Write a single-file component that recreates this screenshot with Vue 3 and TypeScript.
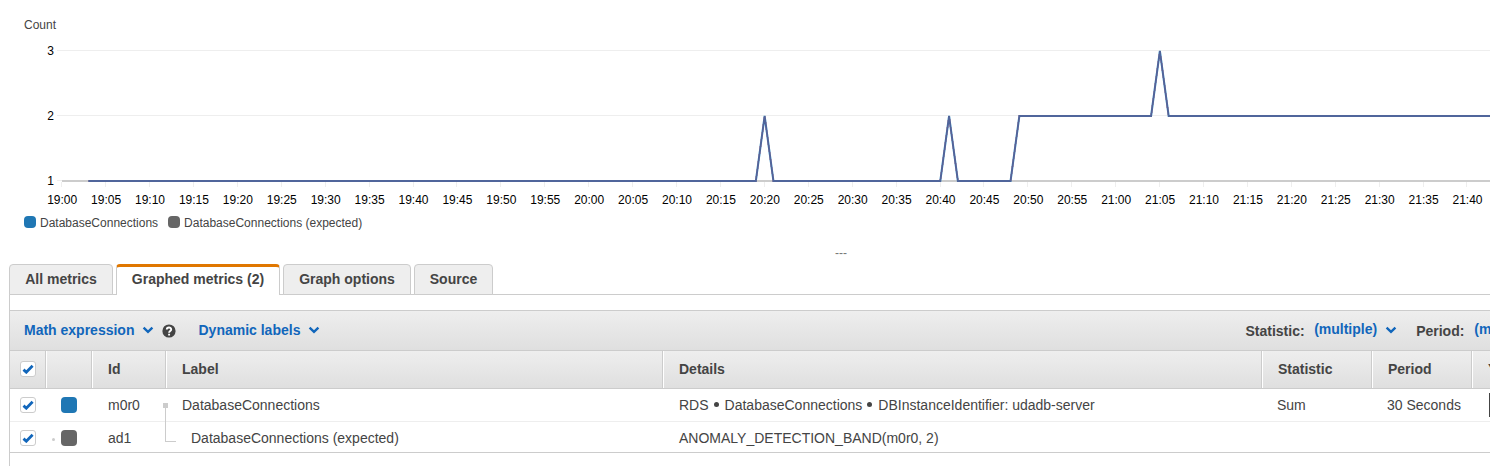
<script setup lang="ts">
interface Series {
  label: string
  color: string
}

interface Row {
  id: string
  label: string
  details: string[]
  color: string
  statistic: string
  period: string
  child: boolean
}

const originX = 62
const minuteWidth = 8.783
const valueY = (v: number): number => 181 - (v - 1) * 65

const ticks = Array.from({ length: 33 }, (_, i) => {
  const minutes = 19 * 60 + i * 5
  return {
    x: Math.floor(originX + i * 5 * minuteWidth - 0.3) + 0.5,
    center: originX + i * 5 * minuteWidth,
    text: `${Math.floor(minutes / 60)}:${String(minutes % 60).padStart(2, '0')}`,
  }
})

const samples: [number, number][] = [
  [3, 1], [79, 1], [80, 2], [81, 1], [100, 1], [101, 2], [102, 1],
  [108, 1], [109, 2], [124, 2], [125, 3], [126, 2], [170, 2],
]
const linePoints = samples
  .map(([m, v]) => `${(originX + m * minuteWidth).toFixed(2)},${valueY(v)}`)
  .join(' ')

const series: Series[] = [
  { label: 'DatabaseConnections', color: '#1f77b4' },
  { label: 'DatabaseConnections (expected)', color: '#666666' },
]

const tabs = [
  { name: 'All metrics', size: 'w-all', active: false },
  { name: 'Graphed metrics (2)', size: 'w-graphed', active: true },
  { name: 'Graph options', size: 'w-options', active: false },
  { name: 'Source', size: 'w-source', active: false },
]

const headings = ['', '', 'Id', 'Label', 'Details', 'Statistic', 'Period', 'Y Axis']

const rows: Row[] = [
  {
    id: 'm0r0',
    label: 'DatabaseConnections',
    details: ['RDS', 'DatabaseConnections', 'DBInstanceIdentifier: udadb-server'],
    color: '#1f77b4',
    statistic: 'Sum',
    period: '30 Seconds',
    child: false,
  },
  {
    id: 'ad1',
    label: 'DatabaseConnections (expected)',
    details: ['ANOMALY_DETECTION_BAND(m0r0, 2)'],
    color: '#666666',
    statistic: '',
    period: '',
    child: true,
  },
]
</script>

<template>
  <main class="page">
    <svg class="chart" width="1490" height="212" viewBox="0 0 1490 212">
      <text class="unit" x="24" y="29">Count</text>
      <g v-for="v in [3, 2, 1]" :key="v">
        <line class="grid" x1="57" x2="1490" :y1="valueY(v) - 0.5" :y2="valueY(v) - 0.5" />
        <text class="tick-text" x="54" :y="valueY(v) + 4" text-anchor="end">{{ v }}</text>
      </g>
      <line class="axis" x1="62" x2="1490" y1="181" y2="181" />
      <g v-for="t in ticks" :key="t.text">
        <line class="grid" :x1="t.x" :x2="t.x" y1="182" y2="187" />
        <text class="tick-text" :x="t.center + 0.2" y="204" text-anchor="middle">{{ t.text }}</text>
      </g>
      <polyline class="line-main" :points="linePoints" />
      <polyline class="line-band" :points="linePoints" />
    </svg>

    <div class="legend">
      <span v-for="s in series" :key="s.label" class="legend-item">
        <i class="legend-swatch" :style="{ background: s.color }"></i>{{ s.label }}
      </span>
    </div>
    <div class="divider-handle">---</div>

    <nav class="tabs">
      <div v-for="t in tabs" :key="t.name" class="tab" :class="[t.size, { active: t.active }]">{{ t.name }}</div>
    </nav>

    <section class="panel">
      <div class="toolbar">
        <div class="tools">
          <span class="link">Math expression</span>
          <svg class="chevron" width="12" height="8" viewBox="0 0 12 8"><path d="M1.6 1.6 6 5.8l4.4-4.2" /></svg>
          <svg class="help" width="14" height="14" viewBox="0 0 14 14">
            <circle cx="7" cy="7" r="6.6" />
            <path d="M4.8 5.6C4.8 2.8 9.2 2.8 9.2 5.4 9.2 7 7.1 6.9 7.1 8.7M7.1 9.8v1.7" />
          </svg>
          <span class="link">Dynamic labels</span>
          <svg class="chevron" width="12" height="8" viewBox="0 0 12 8"><path d="M1.6 1.6 6 5.8l4.4-4.2" /></svg>
        </div>
        <div class="filters">
          <span class="caption">Statistic:</span>
          <span class="link raised multiple">(multiple)</span>
          <svg class="chevron" width="12" height="8" viewBox="0 0 12 8"><path d="M1.6 1.6 6 5.8l4.4-4.2" /></svg>
          <span class="caption period">Period:</span>
          <span class="link raised">(multiple)</span>
        </div>
      </div>

      <div class="grid-row head">
        <div v-for="(h, i) in headings" :key="i" class="cell">
          <span v-if="i === 0" class="check">
            <svg width="12" height="10" viewBox="0 0 12 10"><path d="M1.5 5.6 4.3 8.2 10.6 1.8" /></svg>
          </span>
          <template v-else>{{ h }}</template>
        </div>
      </div>

      <div v-for="r in rows" :key="r.id" class="grid-row body" :class="{ child: r.child }">
        <div class="cell">
          <span class="check">
            <svg width="12" height="10" viewBox="0 0 12 10"><path d="M1.5 5.6 4.3 8.2 10.6 1.8" /></svg>
          </span>
        </div>
        <div class="cell color-cell">
          <i v-if="r.child" class="dot"></i>
          <i class="swatch" :style="{ background: r.color }"></i>
        </div>
        <div class="cell">{{ r.id }}</div>
        <div class="cell label-cell">
          <i v-if="!r.child" class="branch"></i>
          {{ r.label }}
        </div>
        <div class="cell">
          <template v-for="(d, i) in r.details" :key="d"><b v-if="i > 0" class="bullet"></b>{{ d }}</template>
        </div>
        <div class="cell stat">{{ r.statistic }}</div>
        <div class="cell stat">{{ r.period }}</div>
        <div class="cell axis-cell"><i v-if="!r.child" class="axis-toggle"></i></div>
      </div>
    </section>
  </main>
</template>

<style>
body {
  margin: 0;
  background: #fff;
}
</style>

<style scoped>
.page {
  width: 1490px;
  height: 466px;
  overflow: hidden;
  font: 14px/18px "Liberation Sans", Arial, sans-serif;
  color: #444;
  white-space: nowrap;
}
.chart {
  display: block;
}
.unit {
  font-size: 12px;
  fill: #444;
}
.tick-text {
  font-size: 12px;
  fill: #000;
}
.grid {
  stroke: #eee;
}
.axis {
  stroke: #ccc;
  stroke-width: 2;
}
.line-main,
.line-band {
  fill: none;
  stroke: #1f77b4;
  stroke-width: 2;
}
.line-band {
  stroke: #a04a74;
  stroke-opacity: 0.38;
  shape-rendering: crispEdges;
}
.legend {
  display: flex;
  gap: 10px;
  height: 22px;
  padding-left: 24px;
  font-size: 12px;
  line-height: 22px;
}
.legend-item {
  display: flex;
}
.legend-swatch {
  width: 12px;
  height: 12px;
  margin: 4px 4px 0 0;
  border-radius: 4px;
}
.divider-handle {
  height: 30px;
  padding-left: 835px;
  font-size: 12px;
  line-height: 38px;
  color: #777;
}
.tabs {
  display: flex;
  gap: 3px;
  height: 31px;
  box-sizing: border-box;
  padding-left: 9px;
  background: linear-gradient(#ccc, #ccc) 9px 30px / 1481px 1px no-repeat;
}
.tab {
  box-sizing: border-box;
  height: 31px;
  border: 1px solid #ccc;
  border-radius: 4px 4px 0 0;
  background: #eee;
  font-weight: bold;
  line-height: 29px;
  text-align: center;
}
.tab.active {
  border-top: 3px solid #e07700;
  border-bottom: 0;
  background: #fff;
  line-height: 25px;
}
.w-all {
  width: 104px;
}
.w-graphed {
  width: 164px;
}
.w-options {
  width: 128px;
}
.w-source {
  width: 79px;
}
.panel {
  height: 171px;
  margin-left: 9px;
  padding-top: 15px;
  box-sizing: border-box;
  border-left: 1px solid #ccc;
}
.toolbar {
  display: flex;
  box-sizing: border-box;
  height: 41px;
  border-top: 1px solid #ccc;
  border-bottom: 1px solid #ccc;
  background: linear-gradient(#eee, #dfdfdf);
  font-weight: bold;
}
.tools,
.filters {
  display: flex;
  align-items: center;
  flex: none;
  padding-bottom: 2px;
}
.tools {
  width: 1235.5px;
  padding-left: 14px;
  box-sizing: border-box;
}
.link {
  color: #1166bb;
}
.raised {
  margin-top: -2px;
}
.chevron {
  margin: 1px 0 0 8px;
}
.chevron path {
  fill: none;
  stroke: #1166bb;
  stroke-width: 2.4;
}
.help {
  margin: 2px 22px 0 8px;
  fill: #444;
}
.help path {
  fill: none;
  stroke: #fff;
  stroke-width: 1.9;
}
.caption {
  margin-top: 2px;
}
.multiple {
  margin-left: 9.5px;
}
.period {
  margin: 2px 10px 0 19px;
}
.grid-row {
  display: grid;
  grid-template-columns: 36px 46px 74px 497px 599px 110px 100px 120px;
  width: 1480px;
  box-sizing: border-box;
}
.cell {
  display: flex;
  align-items: center;
  box-sizing: border-box;
  padding-left: 16px;
}
.cell:first-child {
  padding-left: 10px;
}
.head {
  height: 38px;
  border-bottom: 1px solid #ccc;
  background: linear-gradient(#eee, #dfdfdf);
  font-weight: bold;
}
.head .cell {
  padding-bottom: 1px;
  border-right: 1px solid #ccc;
}
.head .cell + .cell {
  padding-left: 15px;
  border-left: 1px solid #fff;
}
.body {
  height: 33px;
  border-bottom: 1px solid #eee;
}
.body.child {
  height: 31px;
  border-bottom-color: #ccc;
}
.body.child .cell {
  padding-top: 2px;
}
.check {
  display: flex;
  align-items: center;
  justify-content: center;
  box-sizing: border-box;
  width: 16px;
  height: 16px;
  border: 1px solid #ccc;
  border-radius: 3px;
  background: #fff;
}
.check path {
  fill: none;
  stroke: #1166bb;
  stroke-width: 2.8;
}
.color-cell {
  padding-left: 15px;
}
.child .color-cell {
  padding-left: 6px;
}
.swatch {
  width: 16px;
  height: 16px;
  border-radius: 4px;
}
.dot {
  width: 3px;
  height: 3px;
  margin: 3px 6px 0 0;
  border-radius: 2px;
  background: #ccc;
}
.label-cell {
  position: relative;
}
.child .label-cell {
  padding-left: 25px;
}
.branch {
  position: absolute;
  left: -1px;
  top: 15px;
  width: 11px;
  height: 38px;
  box-sizing: border-box;
  border-left: 1px solid #ccc;
  border-bottom: 1px solid #ccc;
}
.branch::before {
  content: "";
  position: absolute;
  left: -3px;
  top: -1px;
  width: 5px;
  height: 5px;
  background: #ccc;
}
.bullet {
  width: 5px;
  height: 5px;
  margin: -2px 6px 0 5px;
  border-radius: 50%;
  background: #444;
}
.stat {
  padding-left: 15px;
}
.axis-cell {
  padding-left: 17px;
}
.axis-toggle {
  width: 40px;
  height: 24px;
  background: #444;
}
</style>
